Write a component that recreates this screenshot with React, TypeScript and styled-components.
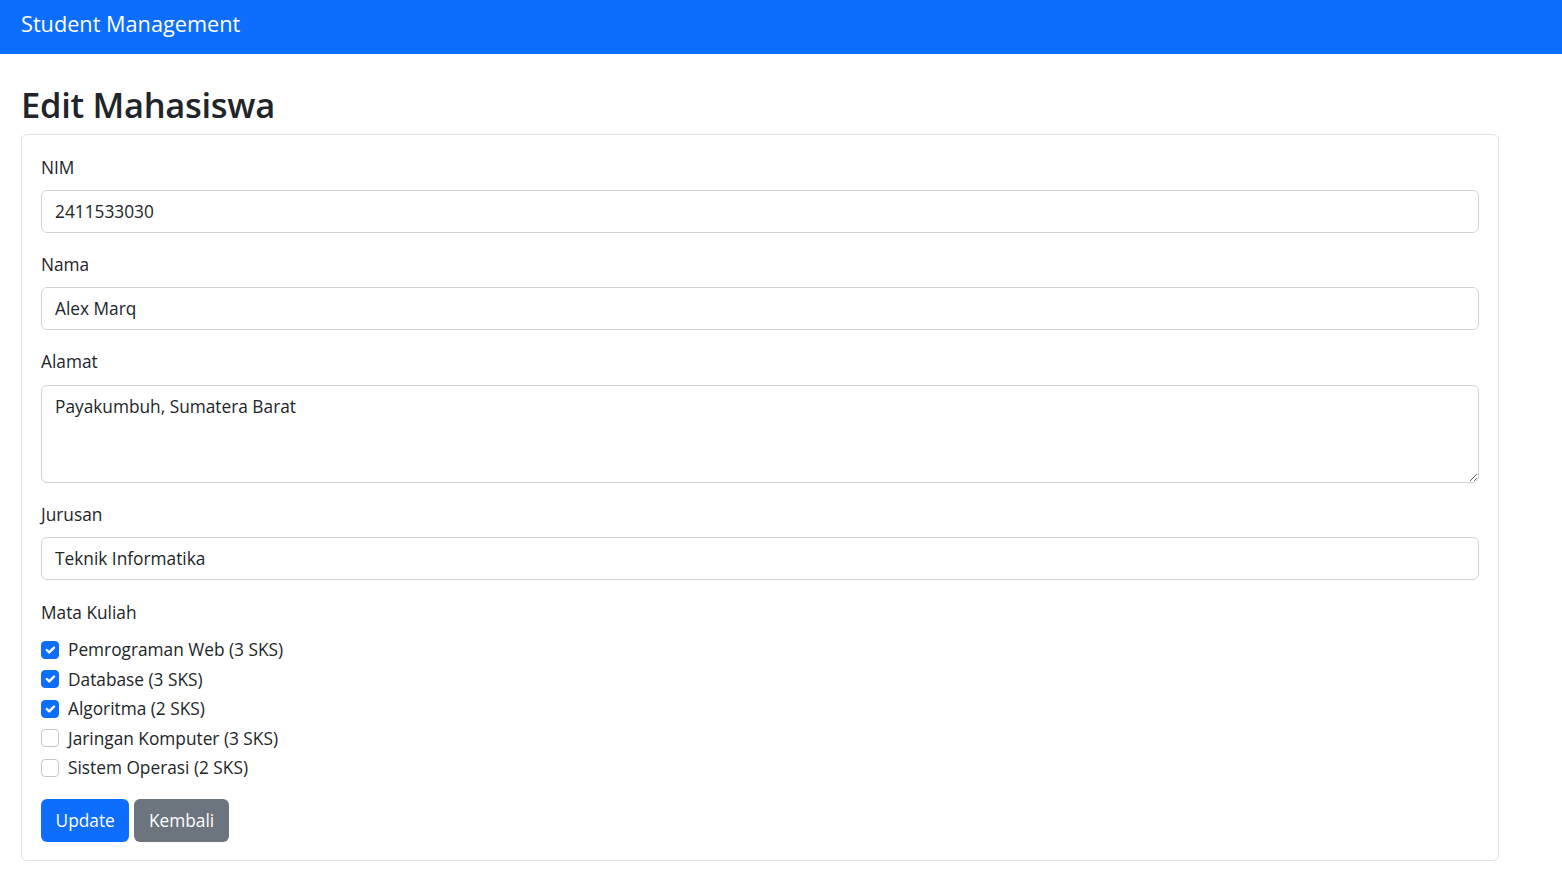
import React from "react";
import styled, { createGlobalStyle } from "styled-components";

const GlobalStyle = createGlobalStyle`
  * {
    box-sizing: border-box;
  }
  body {
    margin: 0;
    background: #fff;
    color: #212529;
    font-family: "Open Sans", "Noto Sans", sans-serif;
    font-size: 17.3px;
  }
`;

const Navbar = styled.nav`
  height: 54px;
  background: #0d6efd;
  display: flex;
  align-items: center;
  padding: 0 21px;
`;

const Brand = styled.a`
  color: #fff;
  font-size: 21.7px;
  text-decoration: none;
  margin-top: -7px;
`;

const Page = styled.main`
  padding: 30px 63px 0 21px;
`;

const Title = styled.h2`
  margin: 0 0 8px;
  font-size: 34.5px;
  font-weight: 600;
  line-height: 42px;
  letter-spacing: -0.3px;
`;

const Card = styled.div`
  border: 1px solid #dee2e6;
  border-radius: 6px;
  padding: 20px 19px 18px;
`;

const Group = styled.div`
  margin-bottom: 19px;
`;

const Label = styled.label<{ $tight?: boolean }>`
  display: block;
  font-size: 17.3px;
  line-height: 26.4px;
  margin-bottom: ${(p) => (p.$tight ? "8px" : "8.8px")};
  padding-top: ${(p) => (p.$tight ? "1.5px" : "0")};
`;

const Input = styled.input`
  display: block;
  width: 100%;
  height: 43px;
  padding: 0 13px;
  font-family: inherit;
  font-size: 17.3px;
  color: #212529;
  border: 1px solid #ced4da;
  border-radius: 6px;
  outline: none;
`;

const TextArea = styled.textarea`
  display: block;
  width: 100%;
  height: 98px;
  padding: 8px 13px;
  font-family: inherit;
  font-size: 17.3px;
  line-height: 26px;
  color: #212529;
  border: 1px solid #ced4da;
  border-radius: 6px;
  outline: none;
  resize: vertical;
`;

const CheckRow = styled.div`
  display: flex;
  align-items: center;
  height: 29.6px;
  font-size: 17.3px;
`;

const Box = styled.span<{ $checked: boolean }>`
  width: 18px;
  height: 18px;
  border-radius: 4px;
  margin-right: 9px;
  display: flex;
  align-items: center;
  justify-content: center;
  background: ${(p) => (p.$checked ? "#0d6efd" : "#fff")};
  border: 1px solid ${(p) => (p.$checked ? "#0d6efd" : "#c4c8cc")};
`;

const Actions = styled.div`
  display: flex;
  gap: 5px;
  margin-top: 16px;
`;

const Button = styled.button<{ $variant: "primary" | "secondary" }>`
  height: 43px;
  padding: 0 14.6px;
  border: none;
  border-radius: 6px;
  font-family: inherit;
  font-size: 17.3px;
  color: #fff;
  background: ${(p) => (p.$variant === "primary" ? "#0d6efd" : "#6c757d")};
`;

const courses = [
  { name: "Pemrograman Web (3 SKS)", checked: true },
  { name: "Database (3 SKS)", checked: true },
  { name: "Algoritma (2 SKS)", checked: true },
  { name: "Jaringan Komputer (3 SKS)", checked: false },
  { name: "Sistem Operasi (2 SKS)", checked: false },
];

const Check = ({ label, checked }: { label: string; checked: boolean }) => (
  <CheckRow>
    <Box $checked={checked}>
      {checked && (
        <svg width="16" height="16" viewBox="0 0 20 20">
          <path
            d="m6 10 3 3 6-6"
            fill="none"
            stroke="#fff"
            strokeWidth="3"
            strokeLinecap="round"
            strokeLinejoin="round"
          />
        </svg>
      )}
    </Box>
    {label}
  </CheckRow>
);

const App = () => {
  return (
    <>
      <GlobalStyle />
      <Navbar>
        <Brand href="#">Student Management</Brand>
      </Navbar>
      <Page>
        <Title>Edit Mahasiswa</Title>
        <Card>
          <Group>
            <Label>NIM</Label>
            <Input defaultValue="2411533030" />
          </Group>
          <Group>
            <Label>Nama</Label>
            <Input defaultValue="Alex Marq" />
          </Group>
          <Group>
            <Label>Alamat</Label>
            <TextArea defaultValue="Payakumbuh, Sumatera Barat" />
          </Group>
          <Group>
            <Label>Jurusan</Label>
            <Input defaultValue="Teknik Informatika" />
          </Group>
          <Label $tight>Mata Kuliah</Label>
          {courses.map((c) => (
            <Check key={c.name} label={c.name} checked={c.checked} />
          ))}
          <Actions>
            <Button $variant="primary">Update</Button>
            <Button $variant="secondary">Kembali</Button>
          </Actions>
        </Card>
      </Page>
    </>
  );
};

export default App;
